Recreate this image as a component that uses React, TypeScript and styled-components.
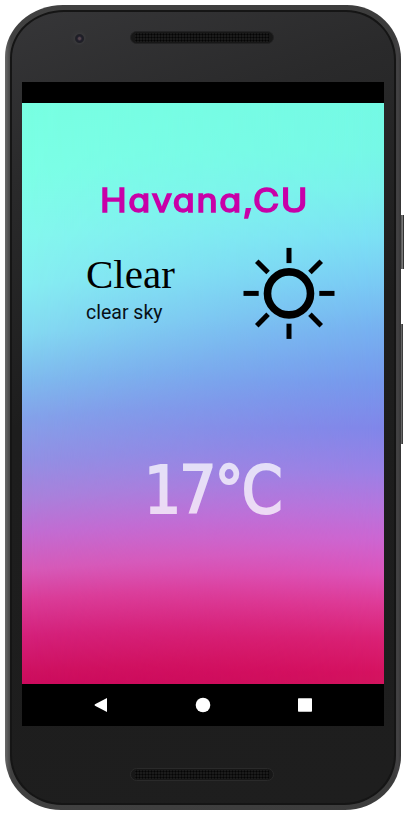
import React from 'react';
import styled, { createGlobalStyle } from 'styled-components';

const GlobalStyle = createGlobalStyle`
  html, body { margin: 0; padding: 0; background: #fff; overflow: hidden; }
  *, *::before, *::after { box-sizing: border-box; }
`;

const Stage = styled.main`
  width: 408px;
  height: 815px;
  padding: 5px 7px 5px 5px;
  background: #fff;
`;

const Device = styled.div`
  position: relative;
  width: 396px;
  height: 805px;
  padding: 5px 5px 5px 5px;
  border-radius: 58px 54px 56px 56px / 52px 54px 54px 54px;
  background: linear-gradient(90deg, #6a6a6a 0, #555 3px, #414141 6px, #3c3c3c 389px, #434244 393px, #343434 396px);
`;

const Face = styled.div`
  display: flex;
  flex-direction: column;
  width: 386px;
  height: 795px;
  padding: 0 11px 0 10px;
  border: 2px solid #151515;
  border-radius: 54px 50px 52px 52px / 48px 50px 50px 50px;
  background: linear-gradient(160deg, #363638 0, #2a2a2b 18%, #1d1d1d 45%, #1e1e1e 100%);
`;

const Forehead = styled.div`
  display: flex;
  flex: none;
  height: 70px;
  padding: 19px 0 0 49px;
  gap: 44px;
`;

const Camera = styled.div`
  width: 15px;
  height: 15px;
  margin: -1px 0 0 0;
  border-radius: 50%;
  background: radial-gradient(circle at 57% 57%, #54444c 0 1px, #1e1d2a 2.5px, #202026 4px, #38383a 5px, #343436 7px);
`;

const Grille = styled.div<{ $dark?: boolean }>`
  flex: none;
  width: 144px;
  height: 13px;
  padding: 1px 4px;
  border: 1px solid ${p => (p.$dark ? '#2a2a2a' : '#222223')};
  border-radius: 7px;
  background: #171717;
  &::before {
    content: '';
    display: block;
    height: 9px;
    background: radial-gradient(circle, #050505 0.7px, #1b1b1b 1.4px) 0 0 / 3px 3px;
  }
`;

const Screen = styled.div`
  display: flex;
  flex: none;
  flex-direction: column;
  width: 362px;
  height: 644px;
  background: #000;
`;

const StatusBar = styled.div`
  flex: none;
  height: 21px;
`;

const Weather = styled.section`
  position: relative;
  isolation: isolate;
  display: flex;
  flex-direction: column;
  height: 581px;
  background: linear-gradient(176deg,
    #78ffe2 0, #7cffe6 11%, #84f8ee 22%, #86eef2 30%, #84daf2 38%, #7fbaee 46%, #84a2ea 52%,
    #9290e4 59%, #a882dc 65%, #c26cd2 71%, #d65ab8 77%, #da3c98 82%, #d4207a 88%, #ce1060 94%, #c80058 100%);
`;

/* The right side of the sky reaches each colour a little earlier. */
const SkyShade = styled.div`
  position: absolute;
  inset: 0;
  z-index: -1;
  background: linear-gradient(180deg,
    #74fae4 0, #76f8e6 8%, #79f0ec 15%, #7be0f4 23%, #79c9f4 31%, #76b0f0 39%, #7698ec 48%,
    #8086e9 56%, #9881e6 63%, #b476de 69%, #cc66d2 75%, #dc54ba 81%, #de3c98 86%, #da2276 92%, #d51260 98%, #d2145e 100%);
  mask-image: linear-gradient(90deg, transparent, #000);
`;

const City = styled.h1`
  width: 240px;
  height: 48px;
  margin: 73px 0 0 78px;
  font: 400 33px/48px Inter, sans-serif;
  font-feature-settings: 'cv11' 1, 'calt' 0;
  letter-spacing: 1.4px;
  color: #c800a8;
  -webkit-text-stroke: 1.6px #c800a8;
  stroke-linejoin: round;
  transform: scaleX(1.09);
  transform-origin: left;
  white-space: nowrap;
`;

const Conditions = styled.div`
  display: flex;
  height: 100px;
  margin: 19px 45px 0 64px;
  justify-content: space-between;
`;

const Summary = styled.div`
  display: flex;
  flex-direction: column;
  padding-top: 6px;
`;

const Condition = styled.h2`
  margin: 0;
  font: 400 41px/50px 'Liberation Serif', serif;
  color: #000;
`;

const Description = styled.p`
  margin: 2px 0 0;
  font: 400 19.5px/24px Roboto, sans-serif;
  color: #071016;
`;

const SunIcon = styled.svg`
  width: 100px;
  height: 100px;
  fill: none;
  stroke: #000;
`;

const Temperature = styled.div`
  margin: 104px 0 0 122px;
  height: 88px;
  font: 400 65px/88px 'DejaVu Sans Condensed', 'DejaVu Sans', sans-serif;
  font-stretch: condensed;
  letter-spacing: -2px;
  color: #fff;
  -webkit-text-stroke: 2px #fff;
  stroke-linejoin: round;
  opacity: 0.74;
  white-space: nowrap;
`;

const NavBar = styled.nav`
  display: flex;
  flex: none;
  height: 42px;
  align-items: center;
  justify-content: space-between;
  padding: 0 71px;
`;

const NavIcon = styled.svg`
  width: 16px;
  height: 16px;
  fill: #fff;
`;

const Chin = styled.div`
  display: flex;
  flex: 1;
  padding: 42px 0 0 108px;
`;

const SideButton = styled.span<{ $top: number; $height: number; $depth: number }>`
  position: absolute;
  top: ${p => p.$top}px;
  left: 396px;
  width: ${p => p.$depth}px;
  height: ${p => p.$height}px;
  background: linear-gradient(90deg, #555, #777 50%, #333 80%);
`;

const RAYS = [0, 45, 90, 135, 180, 225, 270, 315];

export default function App() {
  return (
    <>
      <GlobalStyle />
      <Stage>
        <Device>
          <SideButton $top={210} $height={54} $depth={3} />
          <SideButton $top={319} $height={120} $depth={2} />
          <Face>
            <Forehead>
              <Camera />
              <Grille />
            </Forehead>
            <Screen>
              <StatusBar />
              <Weather>
                <SkyShade />
                <City>Havana,CU</City>
                <Conditions>
                  <Summary>
                    <Condition>Clear</Condition>
                    <Description>clear sky</Description>
                  </Summary>
                  <SunIcon viewBox="0 0 100 100" aria-label="Clear">
                    <circle cx="50" cy="50.4" r="21.5" strokeWidth="7.6" />
                    {RAYS.map(a => (
                      <path
                        key={a}
                        d={a % 90 ? 'M50 20.4V4.4' : 'M50 19.7V4.5'}
                        strokeWidth="5"
                        transform={`translate(0 0.4) rotate(${a} 50 50)`}
                      />
                    ))}
                  </SunIcon>
                </Conditions>
                <Temperature>17°C</Temperature>
              </Weather>
              <NavBar>
                <NavIcon viewBox="0 0 16 16"><path d="M14 1v14L2 8.8Q1 8 2 7.2Z" /></NavIcon>
                <NavIcon viewBox="0 0 16 16"><circle cx="8" cy="8" r="7.3" /></NavIcon>
                <NavIcon viewBox="0 0 16 16"><rect x="1" y="1.3" width="14" height="13.4" rx="0.7" /></NavIcon>
              </NavBar>
            </Screen>
            <Chin>
              <Grille $dark />
            </Chin>
          </Face>
        </Device>
      </Stage>
    </>
  );
}
